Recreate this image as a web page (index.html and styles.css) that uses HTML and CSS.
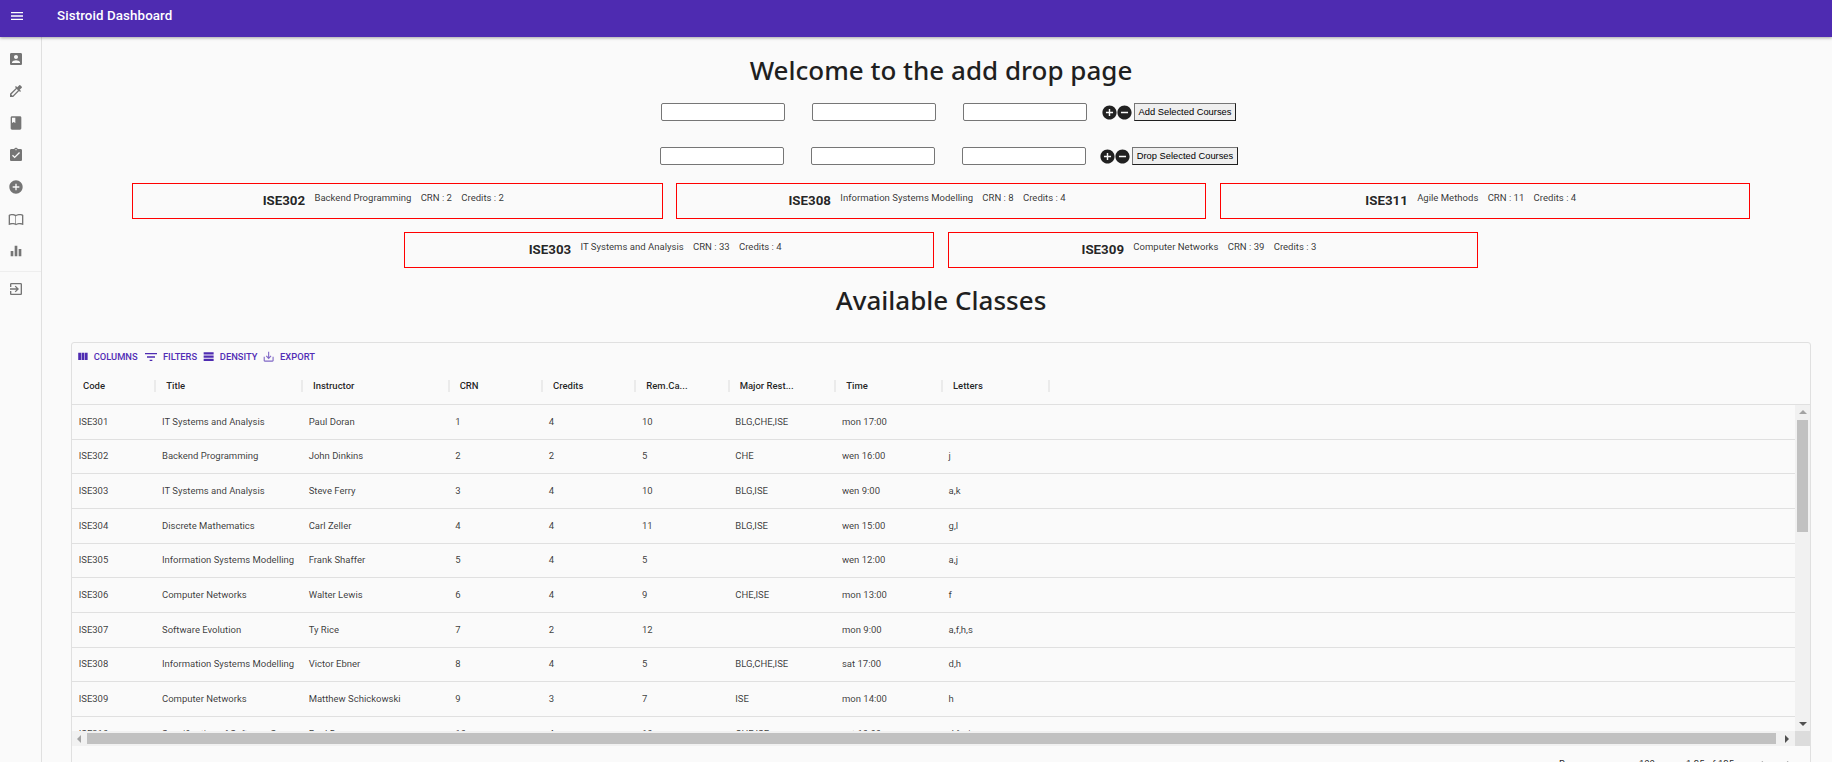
FILE: index.html
```html
<!DOCTYPE html>
<html lang="en">
<head>
    <meta charset="UTF-8">
    <meta name="viewport" content="width=device-width, initial-scale=1.0">
    <title>Sistroid Dashboard</title>
    <link rel="stylesheet" href="styles.css">
</head>
<body>

<header class="appbar">
    <svg class="appbar-menu" viewBox="0 0 24 24"><path d="M3 18h18v-2H3v2zm0-5h18v-2H3v2zm0-7v2h18V6H3z"/></svg>
    <span class="appbar-title">Sistroid Dashboard</span>
</header>

<div class="page">
    <nav class="sidebar">
        <ul class="nav-list">
            <li><svg viewBox="0 0 24 24"><path d="M3 5v14c0 1.1.89 2 2 2h14c1.1 0 2-.9 2-2V5c0-1.1-.9-2-2-2H5c-1.11 0-2 .9-2 2zm12 4c0 1.66-1.34 3-3 3s-3-1.34-3-3 1.34-3 3-3 3 1.34 3 3zm-9 8c0-2 4-3.1 6-3.1s6 1.1 6 3.1v1H6v-1z"/></svg></li>
            <li><svg viewBox="0 0 24 24"><path d="M20.71 5.63l-2.34-2.34c-.39-.39-1.02-.39-1.41 0l-3.12 3.12-1.93-1.91-1.41 1.41 1.42 1.42L3 16.25V21h4.75l8.92-8.92 1.42 1.42 1.41-1.41-1.92-1.92 3.12-3.12c.4-.4.4-1.03.01-1.42zM6.92 19L5 17.08l8.06-8.06 1.92 1.92L6.92 19z"/></svg></li>
            <li><svg viewBox="0 0 24 24"><path d="M18 2H6c-1.1 0-2 .9-2 2v16c0 1.1.9 2 2 2h12c1.1 0 2-.9 2-2V4c0-1.1-.9-2-2-2zM6 4h5v8l-2.5-1.5L6 12V4z"/></svg></li>
            <li><svg viewBox="0 0 24 24"><path d="M19 3h-4.18C14.4 1.84 13.3 1 12 1c-1.3 0-2.4.84-2.82 2H5c-1.1 0-2 .9-2 2v14c0 1.1.9 2 2 2h14c1.1 0 2-.9 2-2V5c0-1.1-.9-2-2-2zm-7 0c.55 0 1 .45 1 1s-.45 1-1 1-1-.45-1-1 .45-1 1-1zm-2 14l-4-4 1.41-1.41L10 14.17l6.59-6.59L18 9l-8 8z"/></svg></li>
            <li><svg viewBox="0 0 24 24"><path d="M12 2C6.48 2 2 6.48 2 12s4.48 10 10 10 10-4.48 10-10S17.52 2 12 2zm5 11h-4v4h-2v-4H7v-2h4V7h2v4h4v2z"/></svg></li>
            <li><svg viewBox="0 0 24 24"><path fill-rule="evenodd" d="M21 5c-1.11-.35-2.33-.5-3.5-.5-1.95 0-4.05.4-5.5 1.5-1.45-1.1-3.55-1.5-5.5-1.5S2.45 4.9 1 6v14.65c0 .25.25.5.5.5.1 0 .15-.05.25-.05C3.1 20.45 5.05 20 6.5 20c1.95 0 4.05.4 5.5 1.5 1.35-.85 3.8-1.5 5.5-1.5 1.65 0 3.35.3 4.75 1.05.1.05.15.05.25.05.25 0 .5-.25.5-.5V6c-.6-.45-1.25-.75-2-1zm0 13.5c-1.1-.35-2.3-.5-3.5-.5-1.7 0-4.15.65-5.5 1.5V8c1.35-.85 3.8-1.5 5.5-1.5 1.2 0 2.4.15 3.5.5v11.5zM3 7c1.1-.35 2.3-.5 3.5-.5 1.5 0 3.2.5 4.5 1.2v11.1c-1.3-.6-3-.8-4.5-.8-1.2 0-2.4.15-3.5.5V7z"/></svg></li>
            <li><svg viewBox="0 0 24 24"><path d="M10 20h4V4h-4v16zm-6 0h4v-8H4v8zM16 9v11h4V9h-4z"/></svg></li>
        </ul>
        <ul class="nav-list nav-bottom">
            <li><svg viewBox="0 0 24 24"><path d="M10.09 15.59L11.5 17l5-5-5-5-1.41 1.41L12.67 11H3v2h9.67l-2.58 2.59zM19 3H5c-1.11 0-2 .9-2 2v4h2V5h14v14H5v-4H3v4c0 1.1.89 2 2 2h14c1.1 0 2-.9 2-2V5c0-1.1-.9-2-2-2z"/></svg></li>
        </ul>
    </nav>

    <main class="content">
        <h1 class="page-title">Welcome to the add drop page</h1>

        <form class="course-form">
            <input type="text" class="course-input">
            <input type="text" class="course-input">
            <input type="text" class="course-input">
            <div class="form-actions">
                <svg viewBox="0 0 24 24"><path d="M12 2C6.48 2 2 6.48 2 12s4.48 10 10 10 10-4.48 10-10S17.52 2 12 2zm5 11h-4v4h-2v-4H7v-2h4V7h2v4h4v2z"/></svg>
                <svg viewBox="0 0 24 24"><path d="M12 2C6.48 2 2 6.48 2 12s4.48 10 10 10 10-4.48 10-10S17.52 2 12 2zm5 11H7v-2h10v2z"/></svg>
                <button type="button" class="form-button">Add Selected Courses</button>
            </div>
        </form>

        <form class="course-form course-form-drop">
            <input type="text" class="course-input">
            <input type="text" class="course-input">
            <input type="text" class="course-input">
            <div class="form-actions">
                <svg viewBox="0 0 24 24"><path d="M12 2C6.48 2 2 6.48 2 12s4.48 10 10 10 10-4.48 10-10S17.52 2 12 2zm5 11h-4v4h-2v-4H7v-2h4V7h2v4h4v2z"/></svg>
                <svg viewBox="0 0 24 24"><path d="M12 2C6.48 2 2 6.48 2 12s4.48 10 10 10 10-4.48 10-10S17.52 2 12 2zm5 11H7v-2h10v2z"/></svg>
                <button type="button" class="form-button">Drop Selected Courses</button>
            </div>
        </form>

        <section class="selected-list">
            <div class="selected-card"><strong>ISE302</strong><span>Backend Programming</span><span>CRN : 2</span><span>Credits : 2</span></div>
            <div class="selected-card"><strong>ISE308</strong><span>Information Systems Modelling</span><span>CRN : 8</span><span>Credits : 4</span></div>
            <div class="selected-card"><strong>ISE311</strong><span>Agile Methods</span><span>CRN : 11</span><span>Credits : 4</span></div>
            <div class="selected-card"><strong>ISE303</strong><span>IT Systems and Analysis</span><span>CRN : 33</span><span>Credits : 4</span></div>
            <div class="selected-card"><strong>ISE309</strong><span>Computer Networks</span><span>CRN : 39</span><span>Credits : 3</span></div>
        </section>

        <h1 class="page-title classes-title">Available Classes</h1>

        <section class="grid">
            <div class="grid-toolbar">
                <span class="tool"><svg viewBox="0 0 24 24"><path d="M10 18h5V5h-5v13zm-6 0h5V5H4v13zM16 5v13h5V5h-5z"/></svg>Columns</span>
                <span class="tool tool-filter"><svg viewBox="0 0 24 24"><path d="M10 18h4v-2h-4v2zM3 6v2h18V6H3zm3 7h12v-2H6v2z"/></svg>Filters</span>
                <span class="tool"><svg viewBox="0 0 24 24"><path d="M21 8H3V4h18v4zm0 2H3v4h18v-4zm0 6H3v4h18v-4z"/></svg>Density</span>
                <span class="tool tool-export"><svg viewBox="0 0 24 24"><path d="M19 12v7H5v-7H3v7c0 1.1.9 2 2 2h14c1.1 0 2-.9 2-2v-7h-2zm-6 .67l2.59-2.58L17 11.5l-5 5-5-5 1.41-1.41L11 12.67V3h2z"/></svg>Export</span>
            </div>

            <div class="grid-head">
                <div class="head-cell">Code</div>
                <div class="head-cell">Title</div>
                <div class="head-cell">Instructor</div>
                <div class="head-cell">CRN</div>
                <div class="head-cell">Credits</div>
                <div class="head-cell">Rem.Ca...</div>
                <div class="head-cell">Major Rest...</div>
                <div class="head-cell">Time</div>
                <div class="head-cell">Letters</div>
            </div>

            <div class="grid-window">
                <div class="grid-rows" id="gridRows"></div>
                <div class="scroll-v">
                    <span class="arrow-up"></span>
                    <div class="thumb-v"></div>
                    <span class="arrow-down"></span>
                </div>
            </div>

            <div class="scroll-h">
                <span class="arrow-left"></span>
                <div class="thumb-h"></div>
                <span class="arrow-right"></span>
                <div class="scroll-corner"></div>
            </div>

            <div class="grid-footer">
                <span>Rows per page:</span>
                <span class="footer-size">100</span>
                <span class="footer-range">1-25 of 125</span>
                <svg class="footer-prev" viewBox="0 0 24 24"><path d="M15.41 7.41L14 6l-6 6 6 6 1.41-1.41L10.83 12z"/></svg>
                <svg class="footer-next" viewBox="0 0 24 24"><path d="M10 6L8.59 7.41 13.17 12l-4.58 4.59L10 18l6-6z"/></svg>
            </div>
        </section>
    </main>
</div>

<script>
    const courses = [
        ['ISE301', 'IT Systems and Analysis', 'Paul Doran', '1', '4', '10', 'BLG,CHE,ISE', 'mon 17:00', ''],
        ['ISE302', 'Backend Programming', 'John Dinkins', '2', '2', '5', 'CHE', 'wen 16:00', 'j'],
        ['ISE303', 'IT Systems and Analysis', 'Steve Ferry', '3', '4', '10', 'BLG,ISE', 'wen 9:00', 'a,k'],
        ['ISE304', 'Discrete Mathematics', 'Carl Zeller', '4', '4', '11', 'BLG,ISE', 'wen 15:00', 'g,l'],
        ['ISE305', 'Information Systems Modelling', 'Frank Shaffer', '5', '4', '5', '', 'wen 12:00', 'a,j'],
        ['ISE306', 'Computer Networks', 'Walter Lewis', '6', '4', '9', 'CHE,ISE', 'mon 13:00', 'f'],
        ['ISE307', 'Software Evolution', 'Ty Rice', '7', '2', '12', '', 'mon 9:00', 'a,f,h,s'],
        ['ISE308', 'Information Systems Modelling', 'Victor Ebner', '8', '4', '5', 'BLG,CHE,ISE', 'sat 17:00', 'd,h'],
        ['ISE309', 'Computer Networks', 'Matthew Schickowski', '9', '3', '7', 'ISE', 'mon 14:00', 'h'],
        ['ISE310', 'Specification of Software S...', 'Paul Doran', '10', '4', '10', 'CHE,ISE', 'sat 10:00', 'd,f,g,i']
    ];

    const gridRows = document.getElementById('gridRows');
    courses.forEach(course => {
        const row = document.createElement('div');
        row.className = 'grid-row';
        course.forEach(value => {
            const cell = document.createElement('div');
            cell.className = 'grid-cell';
            cell.textContent = value;
            row.appendChild(cell);
        });
        gridRows.appendChild(row);
    });
</script>

</body>
</html>
```

FILE: styles.css
```css
/* Basic page setup */
html, body {
    height: 762px;
    overflow: hidden;
}

body {
    margin: 0;
    font-family: Roboto, Arial, sans-serif;
    background-color: #fafafa;
    color: rgba(0, 0, 0, 0.87);
}

/* Top bar */
.appbar {
    height: 37px;
    box-sizing: border-box;
    padding: 0 0 6px 9px;
    display: flex;
    align-items: center;
    background-color: #4e2bb1;
    color: white;
    box-shadow: 0 1px 3px rgba(0, 0, 0, 0.35);
    position: relative;
}

.appbar-menu {
    width: 16px;
    height: 16px;
    fill: white;
}

.appbar-title {
    margin-left: 32px;
    font-size: 13.33px;
    font-weight: 500;
    letter-spacing: 0.1px;
}

/* Sidebar + content */
.page {
    display: flex;
    height: 725px;
}

.sidebar {
    width: 41px;
    flex-shrink: 0;
    border-right: 1px solid #e0e0e0;
}

.nav-list {
    list-style-type: none;
    margin: 0;
    padding: 6px 0 4px;
}

.nav-list li {
    height: 32px;
    display: flex;
    align-items: center;
    padding-left: 8px;
}

.nav-list svg {
    width: 16px;
    height: 16px;
    fill: #757575;
}

.nav-bottom {
    padding-top: 1px;
    border-top: 1px solid #eeeeee;
}

.content {
    flex: 1;
    min-width: 0;
    padding: 0 21px 0 29px;
}

.page-title {
    margin: 0;
    height: 66px;
    line-height: 66px;
    text-align: center;
    font-family: "Noto Sans", sans-serif;
    font-size: 26px;
    font-weight: 500;
    color: #1f1f1f;
}

/* Add / drop forms */
.course-form {
    display: flex;
    justify-content: center;
    align-items: center;
    gap: 27px;
    padding-left: 15px;
    height: 18px;
}

.course-form-drop {
    margin-top: 26px;
    padding-left: 16.5px;
}

.course-input {
    box-sizing: border-box;
    width: 124px;
    height: 18px;
    padding: 0;
    border: 1px solid #767676;
    border-radius: 2px;
    background: white;
}

.form-actions {
    display: flex;
    align-items: center;
    margin-left: -13px;
}

.course-form-drop .form-actions {
    margin-left: -14.5px;
}

.form-actions svg {
    width: 17px;
    height: 17px;
    margin-right: -1.5px;
    fill: #212121;
}

.form-button {
    box-sizing: border-box;
    height: 18px;
    margin-left: 2px;
    padding: 0 4px;
    border: 1px solid;
    border-color: #767676 #1f1f1f #1f1f1f #767676;
    background-color: #efefef;
    font-family: "Liberation Sans", Arial, sans-serif;
    font-size: 9.33px;
    color: black;
    white-space: nowrap;
}

/* Selected course cards */
.selected-list {
    display: flex;
    flex-wrap: wrap;
    justify-content: center;
    gap: 13px 13.25px;
    margin: 18px 0 0;
}

.selected-card {
    box-sizing: border-box;
    width: 530.5px;
    height: 36px;
    padding: 6px 28px 0 0;
    display: flex;
    justify-content: center;
    align-items: flex-start;
    gap: 9.3px;
    border: 1px solid red;
    font-size: 9.55px;
    line-height: 16px;
    color: rgba(0, 0, 0, 0.8);
}

.selected-card strong {
    font-size: 13.33px;
    line-height: 22px;
    color: rgba(0, 0, 0, 0.87);
}

.classes-title {
    height: 74px;
    line-height: 64px;
}

/* Data grid */
.grid {
    border: 1px solid #e0e0e0;
    border-radius: 3px;
    font-size: 9.5px;
}

.grid-toolbar {
    display: flex;
    align-items: center;
    box-sizing: border-box;
    height: 25px;
    padding: 2px 0 0 4px;
}

.tool {
    display: flex;
    align-items: center;
    gap: 4.4px;
    margin-right: 5px;
    font-weight: 500;
    font-size: 9.33px;
    text-transform: uppercase;
    color: #512db5;
}

.tool svg {
    width: 13.3px;
    height: 13.3px;
    fill: #4e2bb1;
}

.tool-filter svg {
    width: 16px;
    height: 16px;
}

.tool-export svg {
    opacity: 0.7;
}

.grid-head, .grid-row {
    display: grid;
    grid-template-columns: 83.33px 146.67px 146.67px 93.33px 93.33px 93.33px 106.67px 106.67px 106.67px;
}

.grid-head {
    height: 36px;
    align-items: center;
    border-bottom: 1px solid #e0e0e0;
    font-weight: 500;
}

.head-cell {
    box-sizing: border-box;
    height: 12px;
    margin-right: -1px;
    padding-left: 11px;
    line-height: 12px;
    border-right: 2px solid #ebebeb;
}

.grid-window {
    display: flex;
    height: 326px;
}

.grid-rows {
    flex: 1;
    min-width: 0;
    overflow: hidden;
}

.grid-row {
    box-sizing: border-box;
    height: 34.67px;
    align-items: center;
    border-bottom: 1px solid #e0e0e0;
    color: rgba(0, 0, 0, 0.78);
}

.grid-cell {
    padding: 0 0 1px 6.67px;
    white-space: nowrap;
}

/* Fake browser scrollbars */
.scroll-v {
    width: 15px;
    flex-shrink: 0;
    display: flex;
    flex-direction: column;
    align-items: center;
    background-color: #f1f1f1;
    box-sizing: border-box;
}

.thumb-v {
    width: 11px;
    height: 112px;
    margin-top: 6px;
    background-color: #c1c1c1;
}

.arrow-up, .arrow-down, .arrow-left, .arrow-right {
    width: 0;
    height: 0;
    flex-shrink: 0;
    border-style: solid;
    border-color: transparent;
}

.arrow-up {
    margin-top: 5px;
    border-width: 0 4px 4px;
    border-bottom-color: #a3a3a3;
}

.arrow-down {
    margin-top: auto;
    margin-bottom: 5px;
    border-width: 4px 4px 0;
    border-top-color: #505050;
}

.scroll-h {
    display: flex;
    align-items: center;
    height: 15px;
    background-color: #f1f1f1;
}

.arrow-left {
    margin-left: 5px;
    border-width: 4px 4px 4px 0;
    border-right-color: #a3a3a3;
}

.thumb-h {
    width: 1689px;
    height: 11px;
    margin-left: 6px;
    background-color: #c1c1c1;
}

.arrow-right {
    margin-left: 9px;
    border-width: 4px 0 4px 4px;
    border-left-color: #505050;
}

.scroll-corner {
    width: 15px;
    height: 15px;
    margin-left: auto;
    background-color: #dcdcdc;
}

.grid-footer {
    display: flex;
    justify-content: flex-end;
    align-items: flex-start;
    height: 36px;
    padding: 12px 13px 0 0;
    box-sizing: border-box;
}

.footer-size {
    margin-left: 15px;
}

.footer-range {
    margin-left: 31px;
}

.grid-footer svg {
    width: 16px;
    height: 16px;
    margin-top: -1px;
    fill: #9e9e9e;
}

.footer-prev {
    margin-left: 19px;
}

.footer-next {
    margin-left: 12px;
}
```
